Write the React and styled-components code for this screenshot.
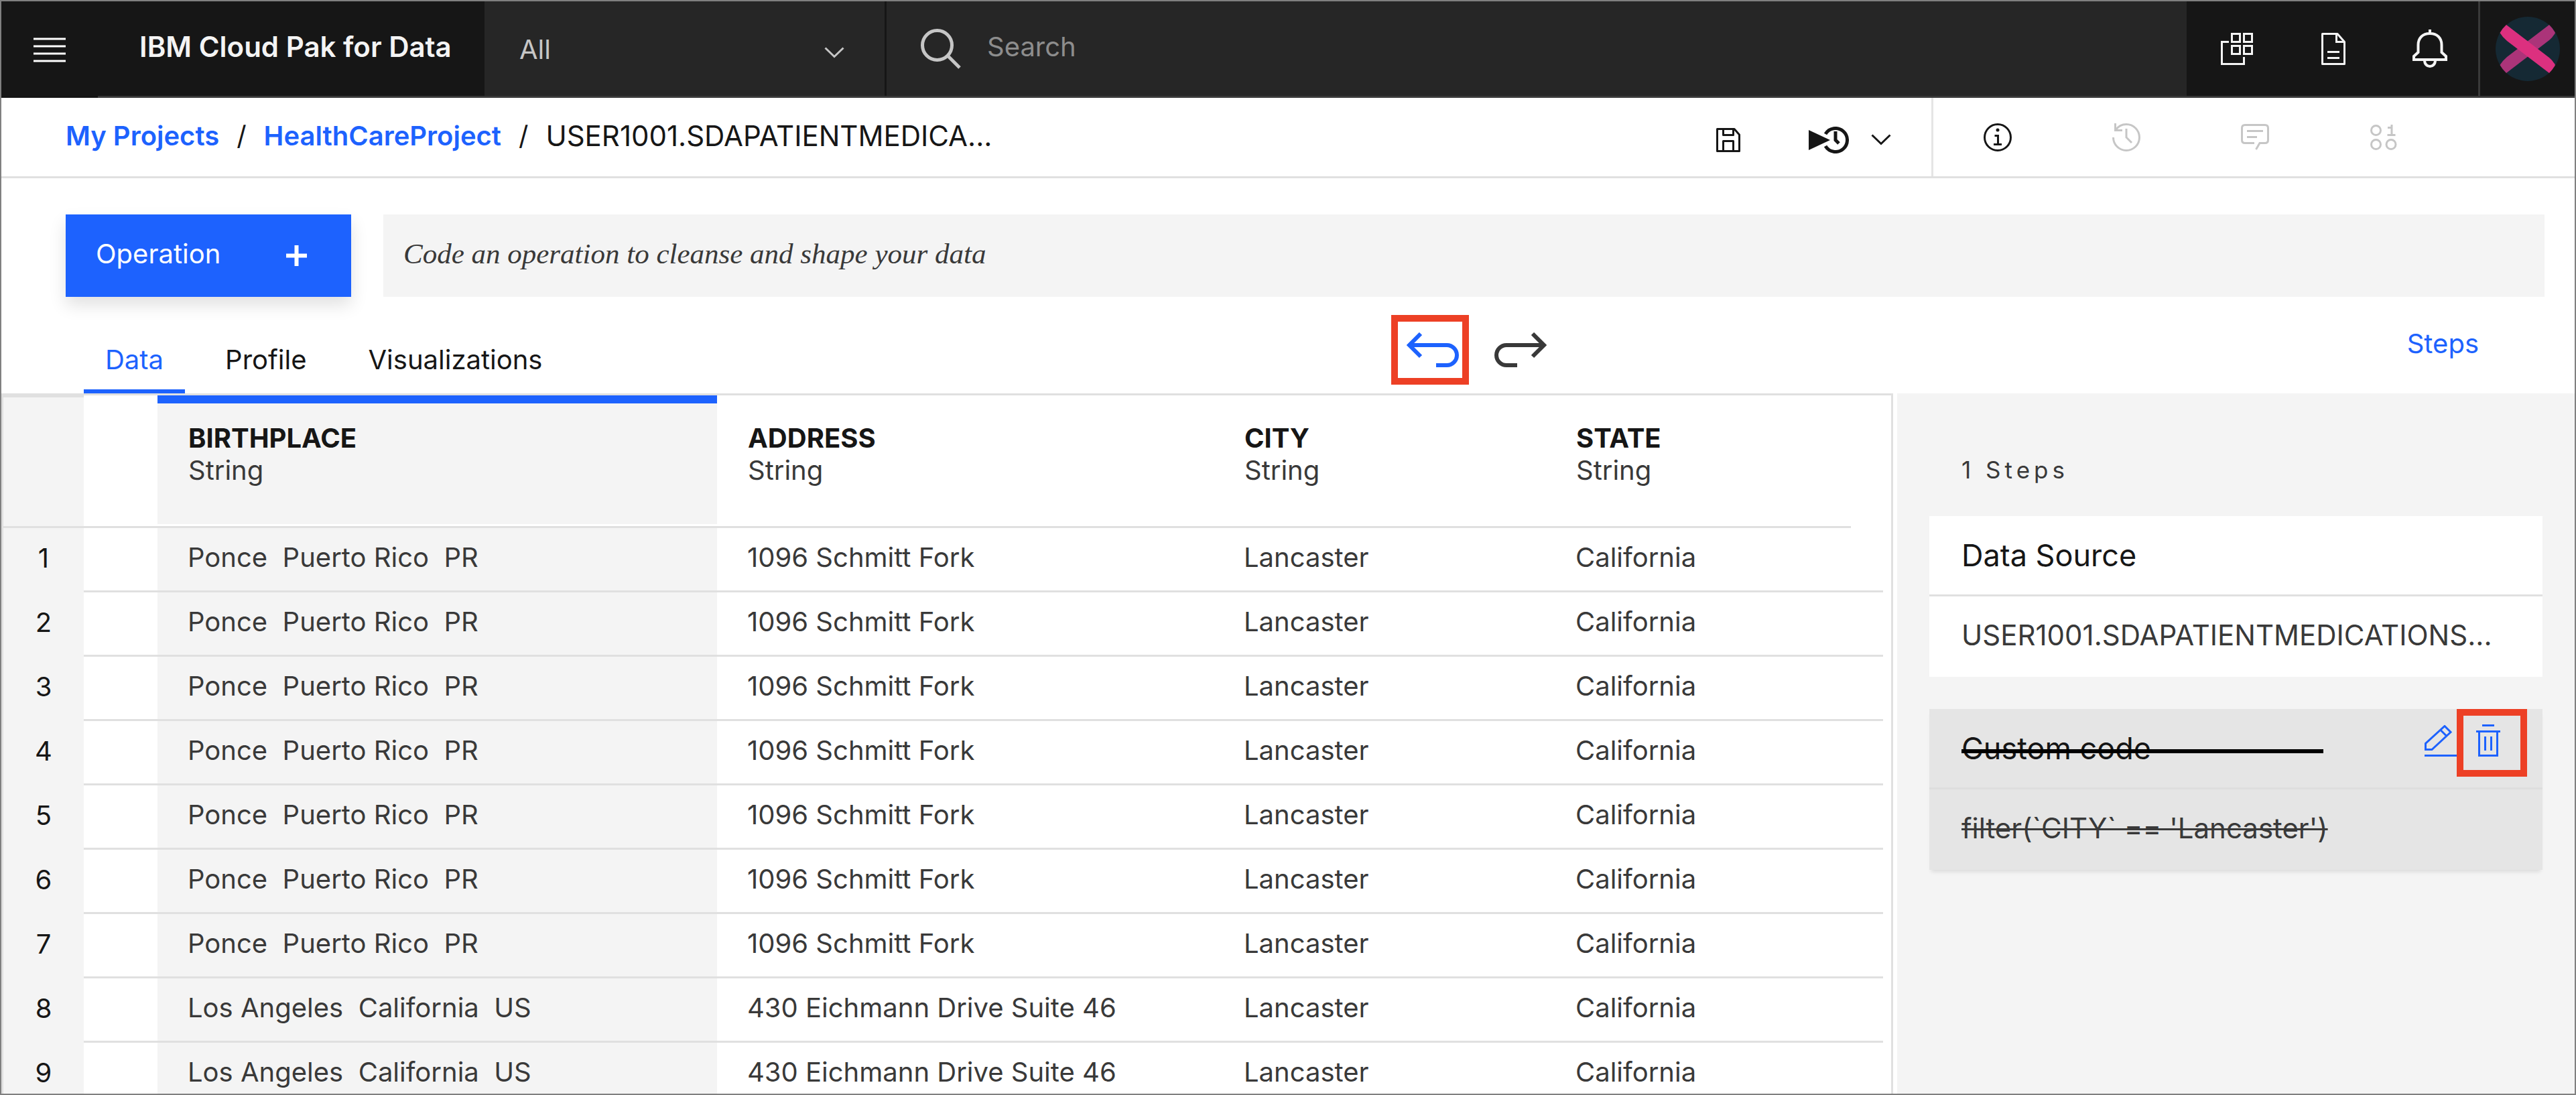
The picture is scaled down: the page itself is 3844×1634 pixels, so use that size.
import React from 'react';
import styled, { createGlobalStyle, css } from 'styled-components';

const blue = '#1d62fe';
const ink = '#161616';
const inkSoft = '#393939';
const line = '#e0e0e0';
const layer = '#f4f4f4';
const marker = '#ed4025';

const GlobalStyle = createGlobalStyle`
  *, *::before, *::after { box-sizing: border-box; }
  body { margin: 0; background: #fff; }
  body, button, input, select {
    font-family: Inter, "Noto Sans", sans-serif;
    font-size: 40px;
    line-height: 48px;
    color: ${ink};
  }
  button, input, select { border: 0; border-radius: 0; margin: 0; padding: 0; background: none; }
  button { cursor: pointer; }
  svg { display: block; flex: none; }
`;

const Page = styled.div`
  display: flex;
  flex-direction: column;
  height: 100vh;
  overflow: hidden;
  border: 2px solid #808080;
  background: #fff;
`;

const Icon = styled.svg.attrs((p) => ({
  viewBox: `0 0 ${p.$w} ${p.$h}`,
  width: p.$w,
  height: p.$h,
  'aria-hidden': true,
}))`
  fill: none;
  stroke: currentColor;
  stroke-width: ${(p) => p.$stroke || 3};
`;

/* Header */

const Header = styled.header`
  display: flex;
  flex: none;
  height: 144px;
  background: ${ink};
`;

const MenuButton = styled.button`
  display: flex;
  align-items: center;
  padding-left: 48px;
  width: 144px;
  color: #fff;
`;

const HeaderBar = styled.div`
  display: flex;
  flex: 1;
  border-bottom: 3px solid ${inkSoft};
`;

const Brand = styled.div`
  display: flex;
  align-items: center;
  width: 577px;
  padding: 0 0 6px 62px;
  color: #f4f4f4;
  font-size: 42px;
  font-weight: 600;
  white-space: nowrap;
`;

const ScopeField = styled.div`
  position: relative;
  display: flex;
  width: 600px;
  background: #262626;
  border-right: 3px solid ${ink};
  color: #c6c6c6;
  > svg {
    position: absolute;
    right: 60px;
    top: 68px;
    pointer-events: none;
  }
`;

const ScopeSelect = styled.select`
  flex: 1;
  appearance: none;
  padding: 3px 96px 0 52px;
  color: #c6c6c6;
`;

const SearchField = styled.label`
  display: flex;
  flex: 1;
  align-items: center;
  gap: 39px;
  padding-left: 51px;
  background: #262626;
  color: #c6c6c6;
`;

const SearchInput = styled.input`
  flex: 1;
  align-self: stretch;
  padding-bottom: 6px;
  color: #f4f4f4;
  &::placeholder { color: #8d8d8d; opacity: 1; }
`;

const HeaderTools = styled.nav`
  display: flex;
  border-left: 3px solid ${ink};
`;

const HeaderButton = styled.button`
  display: flex;
  align-items: center;
  justify-content: center;
  width: 144px;
  color: #f4f4f4;
`;

const ProfileButton = styled(HeaderButton)`
  border-left: 3px solid ${inkSoft};
`;

/* Breadcrumb bar */

const PathBar = styled.div`
  display: flex;
  flex: none;
  height: 120px;
  border-bottom: 3px solid ${line};
`;

const Crumbs = styled.nav`
  display: flex;
  flex: 1;
  align-items: center;
  gap: 26px;
  padding: 0 0 4px 96px;
  white-space: nowrap;
`;

const CrumbLink = styled.a`
  color: ${blue};
  font-weight: 600;
  text-decoration: none;
`;

const CrumbCurrent = styled.span`
  font-size: 42px;
`;

const FileActions = styled.div`
  display: flex;
  align-items: center;
  padding: 8px 60px 0 0;
`;

const FlatButton = styled.button`
  display: flex;
  align-items: center;
  margin-left: ${(p) => p.$gap || 0}px;
`;

const AssetTools = styled.div`
  display: flex;
  width: 960px;
  border-left: 3px solid #e5e5e5;
`;

const AssetButton = styled.button`
  display: flex;
  align-items: center;
  justify-content: center;
  width: 192px;
  color: ${ink};
  &:disabled { color: #c6c6c6; cursor: default; }
`;

/* Operation row */

const OperationRow = styled.div`
  display: flex;
  flex: none;
  gap: 48px;
  padding: 54px 45px 0 96px;
`;

const OperationButton = styled.button`
  display: flex;
  align-items: center;
  justify-content: space-between;
  width: 426px;
  height: 123px;
  padding: 0 66px 0 45px;
  background: ${blue};
  color: #fff;
  box-shadow: 0 12px 24px rgba(0, 0, 0, 0.12);
  > span { padding-bottom: 6px; }
`;

const CodeInput = styled.input`
  flex: 1;
  padding: 0 30px 6px;
  background: ${layer};
  font-family: "Liberation Serif", serif;
  font-size: 43px;
  font-style: italic;
  color: ${inkSoft};
  &::placeholder { color: ${inkSoft}; opacity: 1; }
`;

/* Tabs */

const ViewBar = styled.div`
  display: flex;
  flex: none;
  align-items: center;
  height: 144px;
`;

const Tabs = styled.div`
  display: flex;
  flex: 1;
  align-self: flex-end;
  gap: 28px;
  padding-left: 123px;
`;

const Tab = styled.button`
  height: 95px;
  padding: 0 32px;
  border-bottom: 6px solid ${(p) => (p['aria-selected'] ? blue : 'transparent')};
  color: ${(p) => (p['aria-selected'] ? blue : ink)};
`;

const HistoryButtons = styled.div`
  display: flex;
  align-items: center;
  gap: 38px;
  padding-top: 14px;
`;

const highlighted = css`
  border: 10px solid ${marker};
`;

const UndoButton = styled.button`
  ${highlighted}
  display: flex;
  align-items: center;
  justify-content: center;
  width: 116px;
  height: 104px;
  padding-left: 8px;
  color: ${blue};
`;

const RedoButton = styled.button`
  color: ${inkSoft};
`;

const StepsToggle = styled.div`
  display: flex;
  justify-content: flex-end;
  width: 1534px;
  padding: 0 143px 4px 0;
`;

const StepsButton = styled.button`
  color: ${blue};
`;

/* Workspace */

const Workspace = styled.main`
  display: flex;
  flex: 1;
  min-height: 0;
  gap: 6px;
`;

const GridArea = styled.section`
  flex: 1;
  overflow: hidden;
  padding-right: 12px;
  border-top: 3px solid ${line};
  border-right: 3px solid ${line};
`;

const DataTable = styled.table`
  width: 100%;
  table-layout: fixed;
  border-collapse: separate;
  border-spacing: 0;
`;

const Col = styled.col`
  width: ${(p) => (p.$w ? `${p.$w}px` : 'auto')};
`;

const CornerCell = styled.td`
  padding: 0;
  background: ${layer};
  border-top: 3px solid ${line};
  border-left: 3px solid ${line};
  border-bottom: 3px solid ${line};
`;

const HeadCell = styled.th`
  height: 198px;
  padding: 40px 0 0 46px;
  border-bottom: 3px solid ${line};
  vertical-align: top;
  text-align: left;
  font-weight: 700;
  ${(p) => p.$selected && css`
    background: ${layer};
    box-shadow: inset 0 12px ${blue}, inset 0 -3px #fff;
  `}
`;

const TypeName = styled.div`
  color: ${inkSoft};
  font-weight: 400;
`;

const GutterHead = styled.td`
  border-bottom: 3px solid ${line};
`;

const EdgeHead = styled.td``;

const RowNumber = styled.th`
  height: 96px;
  padding: 0 0 6px;
  background: ${layer};
  border-left: 3px solid ${line};
  font-weight: 400;
  text-align: center;
`;

const Cell = styled.td`
  height: 96px;
  padding: 0 0 6px 45px;
  border-bottom: 3px solid ${line};
  background: ${(p) => (p.$selected ? layer : '#fff')};
  color: ${inkSoft};
  white-space: pre;
`;

/* Steps panel */

const StepsPanel = styled.aside`
  width: 1011px;
  padding: 90px 48px 0;
  background: ${layer};
`;

const StepCount = styled.div`
  padding: 0 48px 45px;
  color: ${inkSoft};
  font-size: 35px;
  letter-spacing: 6px;
`;

const StepCard = styled.article`
  margin-bottom: 48px;
  background: ${(p) => (p.$undone ? '#e5e5e5' : '#fff')};
  ${(p) => p.$undone && css`
    box-shadow: 0 6px 6px -3px rgba(0, 0, 0, 0.1);
  `}
`;

const StepHead = styled.div`
  display: flex;
  height: 120px;
  padding: 0 23px 0 48px;
  border-bottom: 3px solid ${(p) => (p.$undone ? '#dedede' : line)};
`;

const StepTitle = styled.h2`
  position: relative;
  align-self: center;
  width: 540px;
  margin: 0;
  font-size: 45px;
  font-weight: 400;
  line-height: 54px;
  ${(p) => p.$undone && css`
    &::after {
      content: '';
      position: absolute;
      left: 0;
      right: 0;
      top: 28px;
      height: 6px;
      background: #000;
    }
  `}
`;

const StepActions = styled.div`
  display: flex;
  align-items: flex-start;
  margin-left: auto;
  color: ${blue};
`;

const EditButton = styled.button`
  padding-top: 24px;
  color: inherit;
`;

const DeleteButton = styled.button`
  ${highlighted}
  display: flex;
  align-items: center;
  justify-content: center;
  width: 105px;
  height: 101px;
  padding: 0 11px 7px 0;
  color: inherit;
`;

const StepBody = styled.div`
  display: flex;
  align-items: center;
  height: 120px;
  padding: 0 48px 4px;
  color: ${inkSoft};
  font-size: 42px;
  white-space: nowrap;
  text-decoration: ${(p) => (p.$undone ? 'line-through' : 'none')};
  text-decoration-thickness: 3px;
`;

const Chevron = () => (
  <Icon $w={30} $h={17}><path d="M1.5 1.5 15 14.5 28.5 1.5" /></Icon>
);

const Avatar = () => (
  <svg width="96" height="96" viewBox="0 0 96 96" aria-hidden="true">
    <circle cx="48" cy="48" r="48" fill="#152934" />
    <path d="M16 84 80 35Q86 30 89 24A48 48 0 0 0 80 12L17 60Q10 66 6.500 72A48 48 0 0 0 16 84Z" fill="#ab3479" />
    <path d="M16 12 80 61Q86 66 89 72A48 48 0 0 1 80 84L17 36Q10 30 6.500 24A48 48 0 0 1 16 12Z" fill="#dc307f" />
  </svg>
);

const columns = [
  { name: 'BIRTHPLACE', type: 'String', selected: true },
  { name: 'ADDRESS', type: 'String' },
  { name: 'CITY', type: 'String' },
  { name: 'STATE', type: 'String' },
];

const ponce = ['Ponce  Puerto Rico  PR', '1096 Schmitt Fork', 'Lancaster', 'California'];
const angeles = ['Los Angeles  California  US', '430 Eichmann Drive Suite 46', 'Lancaster', 'California'];
const rows = [ponce, ponce, ponce, ponce, ponce, ponce, ponce, angeles, angeles];

export default function App() {
  return (
    <Page>
      <GlobalStyle />
      <Header>
        <MenuButton aria-label="Menu">
          <Icon $w={48} $h={37}><path d="M0 2h48M0 13h48M0 24h48M0 35h48" /></Icon>
        </MenuButton>
        <HeaderBar>
          <Brand>IBM Cloud Pak for Data</Brand>
          <ScopeField>
            <ScopeSelect aria-label="Scope" defaultValue="All">
              <option>All</option>
            </ScopeSelect>
            <Chevron />
          </ScopeField>
          <SearchField>
            <Icon $w={60} $h={60} $stroke={5}>
              <circle cx="24.500" cy="24.500" r="22" />
              <path d="M41 41 58 58" />
            </Icon>
            <SearchInput aria-label="Search" placeholder="Search" />
          </SearchField>
          <HeaderTools>
            <HeaderButton aria-label="Services">
              <Icon $w={48} $h={48}>
                <path d="M12 13.500H1.500V46.500H34.500V36" />
                <rect x="16.500" y="1.500" width="12" height="12" />
                <rect x="34.500" y="1.500" width="12" height="12" />
                <rect x="16.500" y="19.500" width="12" height="12" />
                <rect x="34.500" y="19.500" width="12" height="12" />
              </Icon>
            </HeaderButton>
            <HeaderButton aria-label="Documents">
              <Icon $w={36} $h={48}>
                <path d="M1.500 1.500H24L34.500 13.500V46.500H1.500Z" strokeLinejoin="round" />
                <path d="M22.500 1.500V13.500H34M9 28.500H27M9 37.500H27" />
              </Icon>
            </HeaderButton>
            <HeaderButton aria-label="Notifications">
              <Icon $w={52} $h={57} $stroke={4}>
                <path d="M26 0V5M26 6C15 6 8.500 13 8.500 23V34L2 40V45H50V40L43.500 34V23C43.500 13 37 6 26 6Z" />
                <path d="M18 46C18 58 34 58 34 46" />
              </Icon>
            </HeaderButton>
          </HeaderTools>
          <ProfileButton aria-label="Account"><Avatar /></ProfileButton>
        </HeaderBar>
      </Header>

      <PathBar>
        <Crumbs aria-label="Breadcrumb">
          <CrumbLink href="#projects">My Projects</CrumbLink>
          <span>/</span>
          <CrumbLink href="#project">HealthCareProject</CrumbLink>
          <span>/</span>
          <CrumbCurrent>USER1001.SDAPATIENTMEDICA...</CrumbCurrent>
        </Crumbs>
        <FileActions>
          <FlatButton aria-label="Save">
            <Icon $w={36} $h={36}>
              <path d="M1.500 1.500H27L34.500 10V34.500H1.500Z" strokeLinejoin="round" />
              <path d="M10.500 1.500V10.500H25.500V1.500M10.500 34.500V19.500H25.500V34.500" strokeLinejoin="round" />
            </Icon>
          </FlatButton>
          <FlatButton $gap={102} aria-label="Run or schedule">
            <Icon $w={60} $h={40} $stroke={5}>
              <path d="M0 5 32 20 0 35Z" fill="currentColor" stroke="none" />
              <path d="M25 11A17.500 17.500 0 1 1 25 29M40 7V20L45 25" />
            </Icon>
          </FlatButton>
          <FlatButton $gap={33} aria-label="More run options"><Chevron /></FlatButton>
        </FileActions>
        <AssetTools>
          <AssetButton aria-label="Information">
            <Icon $w={42} $h={42}>
              <circle cx="21" cy="21" r="19.500" />
              <circle cx="21" cy="10" r="2.500" fill="currentColor" stroke="none" />
              <path d="M16.500 18.500H21.500V31.500M15 31.500H27" />
            </Icon>
          </AssetButton>
          <AssetButton aria-label="History" disabled>
            <Icon $w={42} $h={42}>
              <path d="M1.500 21A19.500 19.500 0 1 0 21 1.500A19.500 19.500 0 0 0 5 10" />
              <path d="M4.500 0V10.500H15M21 8V21L29 29" />
            </Icon>
          </AssetButton>
          <AssetButton aria-label="Comments" disabled>
            <Icon $w={42} $h={39}>
              <path d="M20 28.500H6Q1.500 28.500 1.500 24V6Q1.500 1.500 6 1.500H36Q40.500 1.500 40.500 6V24Q40.500 28.500 36 28.500H28L22.500 38" />
              <path d="M9 10.500H33M9 19.500H24" />
            </Icon>
          </AssetButton>
          <AssetButton aria-label="Data preview" disabled>
            <Icon $w={40} $h={38}>
              <circle cx="8.500" cy="8.500" r="7" />
              <circle cx="8.500" cy="29.500" r="7" />
              <circle cx="31" cy="29.500" r="7" />
              <path d="M26 4.500H32M32 0V15M25.500 15.500H37.500" />
            </Icon>
          </AssetButton>
        </AssetTools>
      </PathBar>

      <OperationRow>
        <OperationButton>
          <span>Operation</span>
          <Icon $w={31} $h={31} $stroke={6}><path d="M15.500 0V31M0 15.500H31" /></Icon>
        </OperationButton>
        <CodeInput aria-label="Operation code" placeholder="Code an operation to cleanse and shape your data" />
      </OperationRow>

      <ViewBar>
        <Tabs role="tablist">
          <Tab role="tab" aria-selected={true}>Data</Tab>
          <Tab role="tab" aria-selected={false}>Profile</Tab>
          <Tab role="tab" aria-selected={false}>Visualizations</Tab>
        </Tabs>
        <HistoryButtons>
          <UndoButton aria-label="Undo">
            <Icon $w={78} $h={52} $stroke={6}>
              <path d="M4 19H60A15 15 0 0 1 60 49H44M21 2 4 19 21 36" />
            </Icon>
          </UndoButton>
          <RedoButton aria-label="Redo">
            <Icon $w={78} $h={52} $stroke={6}>
              <path d="M74 19H18A15 15 0 0 0 18 49H34M57 2 74 19 57 36" />
            </Icon>
          </RedoButton>
        </HistoryButtons>
        <StepsToggle><StepsButton>Steps</StepsButton></StepsToggle>
      </ViewBar>

      <Workspace>
        <GridArea>
          <DataTable>
            <colgroup>
              <Col $w={123} />
              <Col $w={110} />
              <Col $w={835} />
              <Col $w={741} />
              <Col $w={495} />
              <Col />
              <Col $w={48} />
            </colgroup>
            <thead>
              <tr>
                <CornerCell />
                <GutterHead />
                {columns.map((c) => (
                  <HeadCell key={c.name} scope="col" $selected={c.selected}>
                    {c.name}
                    <TypeName>{c.type}</TypeName>
                  </HeadCell>
                ))}
                <EdgeHead />
              </tr>
            </thead>
            <tbody>
              {rows.map((row, i) => (
                <tr key={i}>
                  <RowNumber scope="row">{i + 1}</RowNumber>
                  <Cell />
                  {row.map((value, j) => (
                    <Cell key={columns[j].name} $selected={columns[j].selected}>{value}</Cell>
                  ))}
                  <Cell />
                </tr>
              ))}
            </tbody>
          </DataTable>
        </GridArea>

        <StepsPanel>
          <StepCount>1 Steps</StepCount>
          <StepCard>
            <StepHead><StepTitle>Data Source</StepTitle></StepHead>
            <StepBody>USER1001.SDAPATIENTMEDICATIONS...</StepBody>
          </StepCard>
          <StepCard $undone>
            <StepHead $undone>
              <StepTitle $undone>Custom code</StepTitle>
              <StepActions>
                <EditButton aria-label="Edit step">
                  <Icon $w={48} $h={48}>
                    <path d="M1.500 27.500V36.500H11L39 10.500 30 1.500ZM24 7.500 32.500 16M0 45.500H48" />
                  </Icon>
                </EditButton>
                <DeleteButton aria-label="Delete step">
                  <Icon $w={36} $h={48}>
                    <path d="M9 1.500H27M0 10.500H36M4.500 10.500V46.500H31.500V10.500M13.500 18V39M22.500 18V39" />
                  </Icon>
                </DeleteButton>
              </StepActions>
            </StepHead>
            <StepBody $undone>filter(`CITY` == 'Lancaster')</StepBody>
          </StepCard>
        </StepsPanel>
      </Workspace>
    </Page>
  );
}
